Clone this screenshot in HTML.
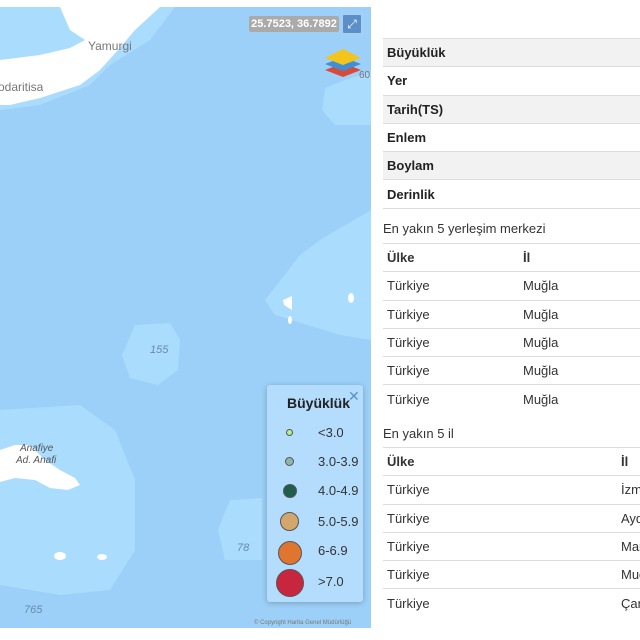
<!DOCTYPE html>
<html><head><meta charset="utf-8"><style>
*{margin:0;padding:0;box-sizing:border-box}
body{width:640px;height:640px;background:#fff;position:relative;overflow:hidden;font-family:"Liberation Sans","DejaVu Sans",sans-serif;color:#333;font-size:13px}
#map{position:absolute;left:0;top:7px;width:371px;height:621px;background:#9dd0f8;overflow:hidden}
#rp{position:absolute;left:383px;top:0;width:257px;height:640px;overflow:hidden}
.t{position:absolute;left:0;width:320px;border-collapse:collapse;table-layout:fixed}
.t td{height:28.3px;padding:0 4px;border-top:1px solid #ddd;font-size:13px;white-space:nowrap;overflow:hidden}
.t1 td{font-weight:bold;color:#222}
.t1 tr:nth-child(odd) td{background:#f2f2f2}
.h{position:absolute;left:0;font-size:13px;color:#333}
.b td{font-weight:bold}
.leg{position:absolute;left:267px;width:96px;height:217px;background:#b3dcfd;border-radius:3px;box-shadow:0 1px 6px rgba(0,0,0,.25)}
.c{position:absolute;border-radius:50%;border:1px solid #555}
.lt{position:absolute;left:51px;font-size:13px;color:#333}
</style></head><body>
<div id="map">
<svg width="371" height="621" viewBox="0 7 371 621" style="position:absolute;left:0;top:0">
<polygon points="0,7 175,7 150,40 110,65 90,85 40,105 0,110" fill="#aadcfe"/>
<polygon points="0,7 160,7 135,30 118,50 100,70 80,85 40,98 10,105 0,105" fill="#fff"/>
<polygon points="0,7 60,7 70,30 85,40 70,48 40,55 0,60" fill="#aadcfe"/>
<polygon points="371,72 345,80 325,88 322,110 335,125 371,125" fill="#aadcfe"/>
<polygon points="371,210 320,240 300,255 265,300 275,315 340,335 371,340" fill="#aadcfe"/>
<polygon points="283,300 292,296 292,310 284,305" fill="#fff"/>
<ellipse cx="290" cy="320" rx="2" ry="4" fill="#fff"/>
<ellipse cx="351" cy="298" rx="3" ry="5" fill="#fff"/>
<polygon points="135,325 170,323 180,340 178,370 158,385 130,378 122,355" fill="#aadcfe"/>
<polygon points="0,410 80,405 115,430 135,480 135,550 110,590 60,595 0,585" fill="#aadcfe"/>
<polygon points="0,450 15,445 30,445 45,460 60,470 75,478 80,485 68,490 50,488 35,480 15,478 0,482" fill="#fff"/>
<ellipse cx="60" cy="556" rx="6" ry="4" fill="#fff"/>
<ellipse cx="102" cy="557" rx="5" ry="3" fill="#fff"/>
<polygon points="230,500 262,498 262,560 225,560 218,530" fill="#aadcfe"/>
<text x="88" y="50" font-size="12" fill="#777" font-family="Liberation Sans">Yamurgi</text>
<text x="-2" y="91" font-size="12" fill="#777" font-family="Liberation Sans">odaritisa</text>
<text x="150" y="353" font-size="11" fill="#6a8aa8" font-style="italic" font-family="Liberation Sans">155</text>
<text x="20" y="451" font-size="10" fill="#555" font-style="italic" font-family="Liberation Sans">Anafiye</text>
<text x="16" y="463" font-size="10" fill="#555" font-style="italic" font-family="Liberation Sans">Ad. Anafi</text>
<text x="237" y="551" font-size="11" fill="#6a8aa8" font-style="italic" font-family="Liberation Sans">78</text>
<text x="24" y="613" font-size="11" fill="#6a8aa8" font-style="italic" font-family="Liberation Sans">765</text>
<text x="359" y="78" font-size="10" fill="#777" font-family="Liberation Sans">60</text>
<text x="254" y="624" font-size="6" fill="#777" font-family="Liberation Sans">© Copyright Harita Genel Müdürlüğü</text>
<polygon points="343,77 361,70 343,63 325,70" fill="#d84a3a"/>
<polygon points="343,71 361,64 343,57 325,64" fill="#3f8fd6"/>
<polygon points="343,65 361,58 343,49 325,58" fill="#f3c41c"/>
</svg>
<div style="position:absolute;left:249px;top:9px;width:90px;height:16px;background:#aaa;border-radius:2px;color:#fff;font-size:11px;font-weight:bold;line-height:16px;text-align:center">25.7523, 36.7892</div>
<div style="position:absolute;left:341px;top:6px;width:22px;height:22px;background:#5a8fc8;border:2px solid #a9cff0;border-radius:3px;color:#fff;font-size:12px;line-height:18px;text-align:center">⤢</div>
<div class="leg" style="top:378px">
<div style="position:absolute;left:20px;top:10px;font-weight:bold;font-size:14px;color:#222">Büyüklük</div>
<div style="position:absolute;left:81px;top:3px;color:#5a8fc8;font-size:14px">✕</div>
<div class="c" style="left:19px;top:44px;width:7px;height:7px;background:#b6f08a"></div><div class="lt" style="top:40px">&lt;3.0</div>
<div class="c" style="left:18px;top:72px;width:9px;height:9px;background:#8fb7a8"></div><div class="lt" style="top:69px">3.0-3.9</div>
<div class="c" style="left:16px;top:99px;width:14px;height:14px;background:#1e5e4a"></div><div class="lt" style="top:98px">4.0-4.9</div>
<div class="c" style="left:13px;top:127px;width:19px;height:19px;background:#d4a66c"></div><div class="lt" style="top:129px">5.0-5.9</div>
<div class="c" style="left:11px;top:156px;width:24px;height:24px;background:#e07530"></div><div class="lt" style="top:158px">6-6.9</div>
<div class="c" style="left:9px;top:184px;width:28px;height:28px;background:#c8253e"></div><div class="lt" style="top:189px">&gt;7.0</div>
</div>
</div>
<div id="rp">
<table class="t t1" style="top:38px">
<tr><td>Büyüklük</td></tr><tr><td>Yer</td></tr><tr><td>Tarih(TS)</td></tr><tr><td>Enlem</td></tr><tr><td>Boylam</td></tr><tr><td style="border-bottom:1px solid #ddd">Derinlik</td></tr>
</table>
<div class="h" style="top:221px">En yakın 5 yerleşim merkezi</div>
<table class="t" style="top:243px">
<tr class="b"><td style="width:136px">Ülke</td><td>İl</td></tr>
<tr><td>Türkiye</td><td>Muğla</td></tr><tr><td>Türkiye</td><td>Muğla</td></tr><tr><td>Türkiye</td><td>Muğla</td></tr><tr><td>Türkiye</td><td>Muğla</td></tr><tr><td>Türkiye</td><td>Muğla</td></tr>
</table>
<div class="h" style="top:426px">En yakın 5 il</div>
<table class="t" style="top:447px">
<tr class="b"><td style="width:234px">Ülke</td><td>İl</td></tr>
<tr><td>Türkiye</td><td>İzmir</td></tr><tr><td>Türkiye</td><td>Aydın</td></tr><tr><td>Türkiye</td><td>Manisa</td></tr><tr><td>Türkiye</td><td>Muğla</td></tr><tr><td>Türkiye</td><td>Çanakkale</td></tr>
</table>
</div>
</body></html>
